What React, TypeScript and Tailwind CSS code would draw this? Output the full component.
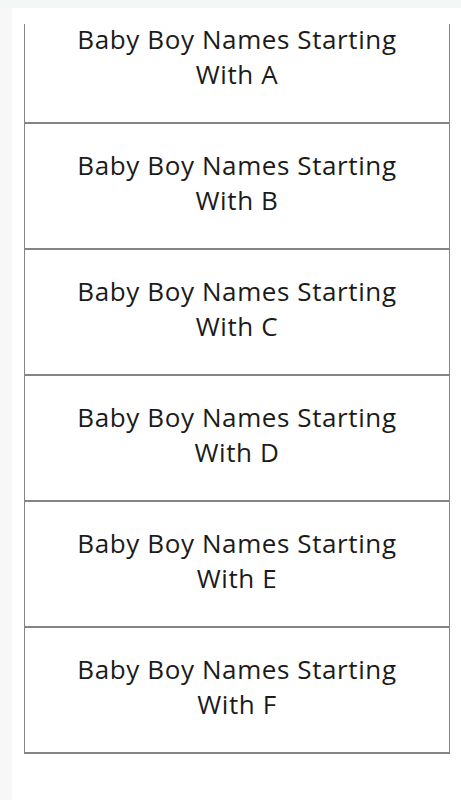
import React from "react";

const letters = ["A", "B", "C", "D", "E", "F"];

export default function App() {
  return (
    <div className="w-[461px] h-[800px] overflow-hidden bg-[#f7f7f7] flex flex-col" style={{ fontFamily: '"Open Sans", "Noto Sans", sans-serif' }}>
      <div className="h-[8px] bg-[#f3f8f7] shrink-0" />
      <div className="flex flex-1">
        <div className="w-[12px] shrink-0 bg-[#f7f7f7]" />
        <div className="flex-1 bg-white pl-[12px] pr-[11px]">
          <div className="flex flex-col -mt-[10px]">
            {letters.map((l, i) => (
              <div
                key={l}
                className="relative h-[126px] border-b-2 border-[#858585] flex flex-col items-center justify-center pb-[6px] text-[#1b1b1b] text-[26px] tracking-[0.6px] leading-[35px] text-center"
              >
                {i === 0 ? (
                  <>
                    <div className="absolute left-0 top-[26px] bottom-0 w-px bg-[#858585]" />
                    <div className="absolute right-0 top-[26px] bottom-0 w-px bg-[#858585]" />
                  </>
                ) : (
                  <>
                    <div className="absolute left-0 top-0 bottom-0 w-px bg-[#858585]" />
                    <div className="absolute right-0 top-0 bottom-0 w-px bg-[#858585]" />
                  </>
                )}
                <span>Baby Boy Names Starting</span>
                <span>With {l}</span>
              </div>
            ))}
          </div>
        </div>
      </div>
    </div>
  );
}
